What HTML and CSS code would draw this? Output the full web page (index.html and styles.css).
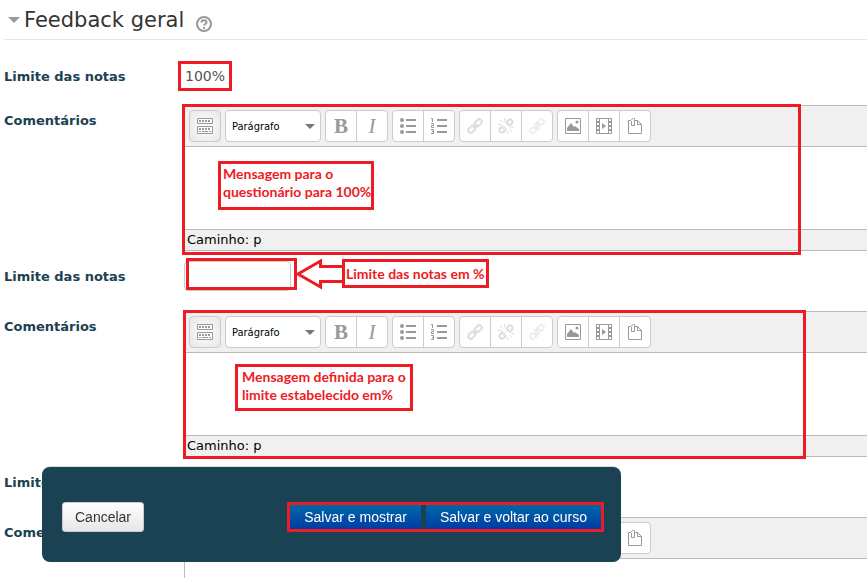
FILE: index.html
```
<!DOCTYPE html>
<html lang="pt-BR">
  <head>
    <meta charset="UTF-8">
    <meta name="viewport" content="width=device-width, initial-scale=1.0">
    <title>Feedback geral</title>

    <link rel="stylesheet" href="styles.css">
  </head>
  <body>
    <!-- Toolbar icons, shared by every editor -->
    <svg class="sprite" aria-hidden="true">
      <symbol id="icon-toggle" viewBox="0 0 16 16">
        <path d="M.5.5h15v5H.5zM.5 8.5h15v7H.5z" fill="#fff" stroke="currentColor"/>
        <path d="M2 3h12M2 11h12" stroke="currentColor" stroke-width="2" stroke-dasharray="2 1"/>
        <path d="M2 13.5h2M5 13.5h6M12 13.5h2" stroke="currentColor"/>
      </symbol>
      <symbol id="icon-bullets" viewBox="0 0 16 16">
        <g fill="currentColor">
          <circle cx="2" cy="2" r="2"/>
          <circle cx="2" cy="8" r="2"/>
          <circle cx="2" cy="14" r="2"/>
          <path d="M6 1h10v2H6zM6 7h10v2H6zM6 13h10v2H6z"/>
        </g>
      </symbol>
      <symbol id="icon-numbers" viewBox="0 0 16 16">
        <path d="M6 1h10v2H6zM6 7h10v2H6zM6 13h10v2H6z" fill="currentColor"/>
        <path d="M0 .5h1.5V4M0 5.5h2.5v2H.5v2H3M0 11.5h2.5v4H0M1 13.5h1.5" fill="none" stroke="currentColor"/>
      </symbol>
      <symbol id="icon-link" viewBox="0 0 16 16">
        <g fill="none" stroke="currentColor" stroke-width="2">
          <rect x="-4" y="-2.5" width="8" height="5" rx="2.5" transform="translate(4.8 11.2) rotate(-45)"/>
          <rect x="-4" y="-2.5" width="8" height="5" rx="2.5" transform="translate(11.2 4.8) rotate(-45)"/>
          <path d="M6 10l4-4"/>
        </g>
      </symbol>
      <symbol id="icon-unlink" viewBox="0 0 16 16">
        <g fill="none" stroke="currentColor" stroke-width="2">
          <path d="M5 7.5L2 10.500a2.500 2.500 0 0 0 3.500 3.500L8.500 11M7.500 5L10.500 2a2.500 2.500 0 0 1 3.500 3.500L11 8.500M5 11l2-2M9 7l2-2"/>
          <path d="M1.500 1.500l3 3M6.500 0v3M0 6.500h3M14.500 14.500l-3-3M9.500 16v-3M16 9.500h-3" stroke-width="1"/>
        </g>
      </symbol>
      <symbol id="icon-nolink" viewBox="0 0 16 16">
        <g fill="none" stroke="currentColor" stroke-width="2">
          <rect x="-3" y="-2.5" width="6" height="5" rx="2.5" transform="translate(4 12) rotate(-45)"/>
          <rect x="-3" y="-2.5" width="6" height="5" rx="2.5" transform="translate(12 4) rotate(-45)"/>
          <path d="M5 5l6 6M11 5l-6 6M8 3v10"/>
        </g>
      </symbol>
      <symbol id="icon-image" viewBox="0 0 16 16">
        <path d="M.5.5h15v15H.5z" fill="none" stroke="currentColor"/>
        <path d="M2 13v-3l4-5 3 4 1-1 4 3v2z" fill="currentColor"/>
        <circle cx="12" cy="4" r="1.5" fill="currentColor"/>
      </symbol>
      <symbol id="icon-media" viewBox="0 0 16 16">
        <path d="M.5.5h15v15H.5zM3.5 0v16M12.5 0v16" fill="none" stroke="currentColor"/>
        <path d="M0 4h4M0 8h4M0 12h4M12 4h4M12 8h4M12 12h4" stroke="currentColor" stroke-width="2"/>
        <path d="M6 5l4 3-4 3z" fill="currentColor"/>
      </symbol>
      <symbol id="icon-files" viewBox="0 0 16 16">
        <g fill="none" stroke="currentColor">
          <path d="M4 2.5H1.5v13h13v-9l-4-4H7M10.5 2.5v4h4"/>
          <path d="M4.500 3v4.500h3V1.500a1 1 0 0 0-2-1L4.500 2"/>
        </g>
      </symbol>
      <symbol id="icon-caret" viewBox="0 0 10 5">
        <path d="M0 0h10L5 5z" fill="#777"/>
      </symbol>
    </svg>

    <form class="mform">
      <header class="mform__header">
        <span class="mform__caret"></span>
        <h3 class="mform__title">Feedback geral</h3>
        <a class="help" href="#" aria-label="Ajuda com Feedback geral">
          <svg width="16" height="16" viewBox="0 0 16 16" fill="none" stroke="currentColor" stroke-width="2">
            <circle cx="8" cy="8" r="7"/>
            <path d="M5.500 6.500c0-3 5-3 5 0 0 1.500-2.500 1.500-2.500 3M8 11v2"/>
          </svg>
        </a>
      </header>

      <div class="row row--static">
        <span class="row__label">Limite das notas</span>
        <div class="row__field">
          <span class="grade mark">100%</span>
        </div>
      </div>

      <div class="row">
        <label class="row__label" for="feedback-0">Comentários</label>
        <div class="row__field">
          <div class="editor">
            <div class="toolbar">
              <button class="tool tool--active" type="button" aria-label="Alternar barra"><svg class="icon"><use href="#icon-toggle"/></svg></button>
              <div class="format">
                <select class="format__select" aria-label="Formato">
                  <option>Parágrafo</option>
                </select>
                <svg class="format__caret"><use href="#icon-caret"/></svg>
              </div>
              <div class="group">
                <button class="tool tool--bold" type="button" aria-label="Negrito">B</button>
                <button class="tool tool--italic" type="button" aria-label="Itálico">I</button>
              </div>
              <div class="group">
                <button class="tool" type="button" aria-label="Lista"><svg class="icon"><use href="#icon-bullets"/></svg></button>
                <button class="tool" type="button" aria-label="Lista numerada"><svg class="icon"><use href="#icon-numbers"/></svg></button>
              </div>
              <div class="group">
                <button class="tool tool--off" type="button" aria-label="Inserir link"><svg class="icon"><use href="#icon-link"/></svg></button>
                <button class="tool tool--off" type="button" aria-label="Remover link"><svg class="icon"><use href="#icon-unlink"/></svg></button>
                <button class="tool tool--faint" type="button" aria-label="Evitar link"><svg class="icon"><use href="#icon-nolink"/></svg></button>
              </div>
              <div class="group">
                <button class="tool" type="button" aria-label="Imagem"><svg class="icon"><use href="#icon-image"/></svg></button>
                <button class="tool" type="button" aria-label="Mídia"><svg class="icon"><use href="#icon-media"/></svg></button>
                <button class="tool" type="button" aria-label="Arquivos"><svg class="icon"><use href="#icon-files"/></svg></button>
              </div>
            </div>
            <textarea class="editor__text" id="feedback-0"></textarea>
            <div class="editor__path">Caminho: p</div>
          </div>
          <div class="frame frame--first mark"></div>
          <p class="note note--first mark">Mensagem para o<br>questionário para 100%</p>
        </div>
      </div>

      <div class="row row--limit">
        <label class="row__label" for="limit-1">Limite das notas</label>
        <div class="row__field">
          <input class="limit" id="limit-1" type="text">
          <div class="frame frame--limit mark"></div>
          <svg class="arrow" width="48" height="32" viewBox="0 0 48 32" fill="#fff" stroke="#ed1c24" stroke-width="3">
            <path d="M47 8.500H25.500V3L3 16l22.500 13v-5.500H47"/>
          </svg>
          <p class="note note--limit mark">Limite das notas em %</p>
        </div>
      </div>

      <div class="row">
        <label class="row__label" for="feedback-1">Comentários</label>
        <div class="row__field">
          <div class="editor">
            <div class="toolbar">
              <button class="tool tool--active" type="button" aria-label="Alternar barra"><svg class="icon"><use href="#icon-toggle"/></svg></button>
              <div class="format">
                <select class="format__select" aria-label="Formato">
                  <option>Parágrafo</option>
                </select>
                <svg class="format__caret"><use href="#icon-caret"/></svg>
              </div>
              <div class="group">
                <button class="tool tool--bold" type="button" aria-label="Negrito">B</button>
                <button class="tool tool--italic" type="button" aria-label="Itálico">I</button>
              </div>
              <div class="group">
                <button class="tool" type="button" aria-label="Lista"><svg class="icon"><use href="#icon-bullets"/></svg></button>
                <button class="tool" type="button" aria-label="Lista numerada"><svg class="icon"><use href="#icon-numbers"/></svg></button>
              </div>
              <div class="group">
                <button class="tool tool--off" type="button" aria-label="Inserir link"><svg class="icon"><use href="#icon-link"/></svg></button>
                <button class="tool tool--off" type="button" aria-label="Remover link"><svg class="icon"><use href="#icon-unlink"/></svg></button>
                <button class="tool tool--faint" type="button" aria-label="Evitar link"><svg class="icon"><use href="#icon-nolink"/></svg></button>
              </div>
              <div class="group">
                <button class="tool" type="button" aria-label="Imagem"><svg class="icon"><use href="#icon-image"/></svg></button>
                <button class="tool" type="button" aria-label="Mídia"><svg class="icon"><use href="#icon-media"/></svg></button>
                <button class="tool" type="button" aria-label="Arquivos"><svg class="icon"><use href="#icon-files"/></svg></button>
              </div>
            </div>
            <textarea class="editor__text" id="feedback-1"></textarea>
            <div class="editor__path">Caminho: p</div>
          </div>
          <div class="frame frame--second mark"></div>
          <p class="note note--second mark">Mensagem definida para o<br>limite estabelecido em%</p>
        </div>
      </div>

      <div class="row row--limit">
        <label class="row__label" for="limit-2">Limite das notas</label>
        <div class="row__field">
          <input class="limit" id="limit-2" type="text">
        </div>
      </div>

      <div class="row">
        <label class="row__label" for="feedback-2">Comentários</label>
        <div class="row__field">
          <div class="editor">
            <div class="toolbar">
              <button class="tool tool--active" type="button" aria-label="Alternar barra"><svg class="icon"><use href="#icon-toggle"/></svg></button>
              <div class="format">
                <select class="format__select" aria-label="Formato">
                  <option>Parágrafo</option>
                </select>
                <svg class="format__caret"><use href="#icon-caret"/></svg>
              </div>
              <div class="group">
                <button class="tool tool--bold" type="button" aria-label="Negrito">B</button>
                <button class="tool tool--italic" type="button" aria-label="Itálico">I</button>
              </div>
              <div class="group">
                <button class="tool" type="button" aria-label="Lista"><svg class="icon"><use href="#icon-bullets"/></svg></button>
                <button class="tool" type="button" aria-label="Lista numerada"><svg class="icon"><use href="#icon-numbers"/></svg></button>
              </div>
              <div class="group">
                <button class="tool tool--off" type="button" aria-label="Inserir link"><svg class="icon"><use href="#icon-link"/></svg></button>
                <button class="tool tool--off" type="button" aria-label="Remover link"><svg class="icon"><use href="#icon-unlink"/></svg></button>
                <button class="tool tool--faint" type="button" aria-label="Evitar link"><svg class="icon"><use href="#icon-nolink"/></svg></button>
              </div>
              <div class="group">
                <button class="tool" type="button" aria-label="Imagem"><svg class="icon"><use href="#icon-image"/></svg></button>
                <button class="tool" type="button" aria-label="Mídia"><svg class="icon"><use href="#icon-media"/></svg></button>
                <button class="tool" type="button" aria-label="Arquivos"><svg class="icon"><use href="#icon-files"/></svg></button>
              </div>
            </div>
            <textarea class="editor__text" id="feedback-2"></textarea>
          </div>
        </div>
      </div>

      <div class="actions">
        <button class="btn" type="button">Cancelar</button>
        <div class="actions__save mark">
          <button class="btn btn--primary" type="submit">Salvar e mostrar</button>
          <button class="btn btn--primary" type="submit">Salvar e voltar ao curso</button>
        </div>
      </div>
    </form>
  </body>
</html>
```
FILE: styles.css
```
:root {
  --red: #ed1c24;
  --navy: #1b4252;
  --line: #bbb;
  --panel: #f0f0f0;
  --icon: #999;

  --font-body: Verdana, "DejaVu Sans", sans-serif;
  --font-button: Arial, "Liberation Sans", sans-serif;
  --font-note: Lato, sans-serif;
}

*, *::before, *::after {
  box-sizing: border-box;
}

body {
  margin: 0;
  background-color: #fff;
  font-family: var(--font-body);
  font-size: 13px;
  line-height: 20px;
}

.sprite {
  position: absolute;
  width: 0;
  height: 0;
}

/* Red highlights drawn over the form */
.mark {
  border: 3px solid var(--red);
}

.mform {
  height: 100vh;
  padding-left: 4px;
  overflow: hidden;
}

.mform__header {
  display: flex;
  align-items: center;
  height: 40px;
  margin-bottom: 21px;
  border-bottom: 1px solid #e5e5e5;
}

.mform__caret {
  margin: 0 4px;
  border: 6px solid transparent;
  border-top-color: var(--icon);
  border-bottom: 0;
}

.mform__title {
  margin: 0;
  font-size: 21px;
  font-weight: 400;
  line-height: 40px;
  color: #333;
}

.help {
  height: 16px;
  margin: 8px 0 0 12px;
  color: var(--icon);
}
.help svg {
  display: block;
}

/* Form rows */
.row {
  display: grid;
  grid-template-columns: 180px 1fr;
}
.row--static {
  margin-bottom: 14px;
}
.row--limit {
  margin: 10px 0 20px;
}

.row__label {
  padding-top: 6px;
  font-weight: 700;
  color: var(--navy);
}

.row__field {
  position: relative;
}

.grade {
  display: block;
  width: max-content;
  margin-left: -6px;
  padding: 2px 4px;
  font-size: 14px;
  color: #555;
}

.limit {
  display: block;
  width: 107px;
  height: 30px;
  padding: 4px 6px;
  border: 1px solid #ccc;
  border-radius: 4px;
}

/* Editor */
.editor {
  border: 1px solid var(--line);
  border-right: 0;
}

.toolbar {
  display: flex;
  gap: 4px;
  padding: 4px;
  border-bottom: 1px solid var(--line);
  background-color: var(--panel);
}

.group {
  display: flex;
  border: 1px solid #ccc;
  border-radius: 4px;
  background-color: #fff;
}

.tool {
  display: flex;
  align-items: center;
  justify-content: center;
  width: 30px;
  height: 30px;
  padding: 0;
  border: 0;
  background: none;
  color: var(--icon);
}
.tool + .tool {
  width: 31px;
  border-left: 1px solid #ccc;
}
.tool--active {
  width: 32px;
  height: 32px;
  border: 1px solid #ccc;
  border-radius: 4px;
  background: radial-gradient(#fff, #e6e6e6);
}
.tool--bold,
.tool--italic {
  font-family: "Liberation Serif", serif;
  font-size: 21px;
}
.tool--bold {
  font-weight: 700;
}
.tool--italic {
  font-style: italic;
}
.tool--off {
  color: #ddd;
}
.tool--faint {
  color: #eee;
}

.icon {
  width: 16px;
  height: 16px;
}

.format {
  position: relative;
}
.format__select {
  display: block;
  width: 96px;
  height: 32px;
  padding: 0 6px;
  border: 1px solid #ccc;
  border-radius: 4px;
  appearance: none;
  background-color: #fff;
  font-family: Tahoma, "DejaVu Sans Condensed", sans-serif;
  font-size: 11px;
  color: #000;
}
.format__caret {
  position: absolute;
  top: 14px;
  right: 6px;
  width: 10px;
  height: 5px;
  pointer-events: none;
}

.editor__text {
  display: block;
  width: 100%;
  height: 82px;
  padding: 8px;
  border: 0;
  resize: none;
}

.editor__path {
  padding-left: 2px;
  border-top: 1px solid var(--line);
  background-color: var(--panel);
  color: #000;
}

/* Annotations */
.frame,
.note,
.arrow {
  position: absolute;
  pointer-events: none;
}

.frame--first {
  top: -1px;
  left: -2px;
  width: 619px;
  height: 151px;
}
.frame--second {
  top: -1px;
  left: -1px;
  width: 623px;
  height: 149px;
}
.frame--limit {
  top: -3px;
  left: 2px;
  width: 111px;
  height: 32px;
}

.note {
  margin: 0;
  padding: 1px 2px 6px;
  background-color: #fff;
  font-family: var(--font-note);
  font-size: 14px;
  font-weight: 700;
  line-height: 18px;
  white-space: nowrap;
  color: var(--red);
}
.note--first {
  top: 56px;
  left: 34px;
  width: 156px;
}
.note--second {
  top: 53px;
  left: 51px;
  width: 178px;
  padding: 1px 4px 4px;
}
.note--limit {
  top: -2px;
  left: 158px;
  width: 147px;
  padding: 3px 1px 2px;
}

.arrow {
  top: -3px;
  left: 111px;
}

/* Floating action bar */
.actions {
  position: fixed;
  bottom: 16px;
  left: 42px;
  display: flex;
  align-items: center;
  justify-content: space-between;
  width: 579px;
  height: 95px;
  padding: 5px 17px 0 20px;
  border-radius: 8px;
  background-color: var(--navy);
  box-shadow: 0 -1px #ddd;
}

.actions__save {
  display: flex;
  gap: 5px;
}

.btn {
  height: 30px;
  padding: 0 12px;
  border: 1px solid #ccc;
  border-radius: 3px;
  background: linear-gradient(#fff, #e6e6e6);
  font-family: var(--font-button);
  font-size: 14px;
  color: #333;
}
.btn--primary {
  height: 24px;
  padding: 0 14px;
  border: 0;
  border-radius: 0;
  background: linear-gradient(#0067a8, #003ca4);
  color: #fff;
}
```
